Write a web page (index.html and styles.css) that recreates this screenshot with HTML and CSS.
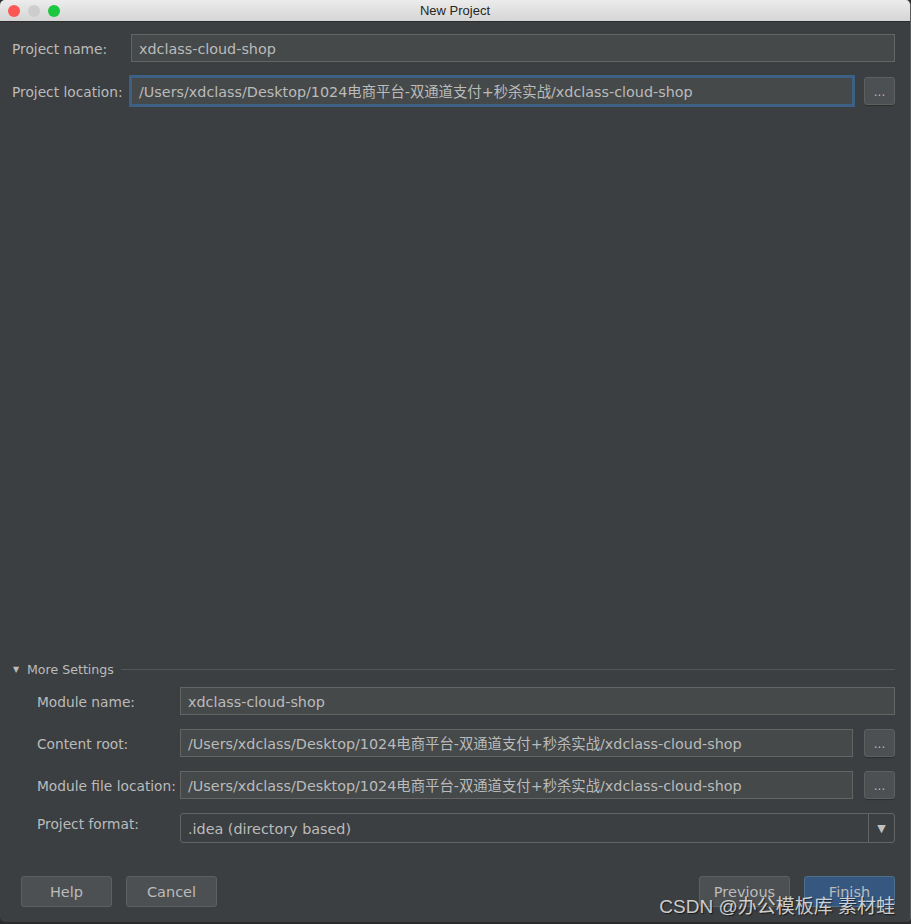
FILE: index.html
```html
<!DOCTYPE html>
<html>
<head>
<meta charset="utf-8">
<link rel="stylesheet" href="styles.css">
</head>
<body>
<div class="window">
  <div class="titlebar">
    <div class="lights">
      <span class="light red"></span>
      <span class="light grey"></span>
      <span class="light green"></span>
    </div>
    <div class="title">New Project</div>
  </div>
  <div class="content">
    <div class="form top">
      <label class="label">Project name:</label>
      <div class="field"><div class="input">xdclass-cloud-shop</div></div>
      <label class="label">Project location:</label>
      <div class="field">
        <div class="input focused">/Users/xdclass/Desktop/1024电商平台-双通道支付+秒杀实战/xdclass-cloud-shop</div>
        <div class="browse">...</div>
      </div>
    </div>
    <div class="spacer"></div>
    <div class="section-head">
      <span class="tri">&#9660;</span>
      <span class="section-title">More Settings</span>
      <span class="rule"></span>
    </div>
    <div class="form sub">
      <label class="label">Module name:</label>
      <div class="field"><div class="input">xdclass-cloud-shop</div></div>
      <label class="label">Content root:</label>
      <div class="field">
        <div class="input">/Users/xdclass/Desktop/1024电商平台-双通道支付+秒杀实战/xdclass-cloud-shop</div>
        <div class="browse">...</div>
      </div>
      <label class="label">Module file location:</label>
      <div class="field">
        <div class="input">/Users/xdclass/Desktop/1024电商平台-双通道支付+秒杀实战/xdclass-cloud-shop</div>
        <div class="browse">...</div>
      </div>
      <label class="label fmt">Project format:</label>
      <div class="field">
        <div class="combo">
          <span class="combo-text">.idea (directory based)</span>
          <span class="combo-arrow">&#9660;</span>
        </div>
      </div>
    </div>
    <div class="footer">
      <div class="btns">
        <div class="btn">Help</div>
        <div class="btn">Cancel</div>
      </div>
      <div class="btns">
        <div class="btn">Previous</div>
        <div class="btn primary">Finish</div>
      </div>
    </div>
    <div class="watermark">CSDN @办公模板库 素材蛙</div>
  </div>
</div>
</body>
</html>
```

FILE: styles.css
```css
html, body {
  margin: 0;
  padding: 0;
  background: #2a2b2c;
}
body {
  width: 911px;
  height: 924px;
  overflow: hidden;
  font-family: "DejaVu Sans", "Noto Sans CJK SC", sans-serif;
}
.window {
  width: 910px;
  height: 922px;
  display: flex;
  flex-direction: column;
  background: #3c3f41;
  border-right: 1px solid #5a5d5f;
  border-radius: 5px;
  overflow: hidden;
}
.titlebar {
  height: 22px;
  flex: none;
  background: linear-gradient(#ececec, #d5d5d5);
  border-bottom: 1px solid #2b2b2b;
  position: relative;
  display: flex;
  align-items: center;
  justify-content: center;
  box-sizing: border-box;
}
.lights {
  position: absolute;
  left: 8px;
  top: 5px;
  display: flex;
  gap: 8px;
}
.light {
  width: 12px;
  height: 12px;
  border-radius: 50%;
  display: block;
}
.red { background: #fc5753; }
.grey { background: #cdcdcd; }
.green { background: #1cc73f; }
.title {
  font-family: "Liberation Sans", "DejaVu Sans", sans-serif;
  font-size: 13px;
  color: #262626;
}
.content {
  flex: 1;
  display: flex;
  flex-direction: column;
  padding: 12px 15px 15px 12px;
  position: relative;
}
.form {
  display: grid;
  row-gap: 14px;
  align-items: center;
  color: #bbbbbb;
}
.form.top {
  grid-template-columns: 119px 1fr;
  row-gap: 15px;
}
.form.sub {
  grid-template-columns: 143px 1fr;
  padding-left: 25px;
}
.label {
  color: #bbbbbb;
  font-size: 13.75px;
  white-space: nowrap;
  padding-top: 1px;
}
.label.fmt {
  align-self: start;
  padding-top: 3px;
}
.field {
  display: flex;
  gap: 11px;
  align-items: center;
}
.input {
  flex: 1;
  height: 28px;
  box-sizing: border-box;
  background: #45494a;
  border: 1px solid #646464;
  color: #bbbbbb;
  font-size: 14.35px;
  line-height: 28px;
  padding: 0 7px;
  white-space: nowrap;
  overflow: hidden;
}
.input.focused {
  border-color: #3d6185;
  box-shadow: 0 0 0 2px #3d6185;
}
.browse {
  width: 31px;
  height: 28px;
  box-sizing: border-box;
  flex: none;
  background: #4c5052;
  border: 1px solid #5e6060;
  border-radius: 3px;
  box-shadow: 0 2px 1px -1px #2b2d2e;
  color: #bbbbbb;
  font-size: 12px;
  text-align: center;
  line-height: 28px;
}
.spacer {
  flex: 1;
}
.section-head {
  display: flex;
  align-items: center;
  height: 16px;
  color: #bbbbbb;
  margin-bottom: 10px;
  padding-top: 1px;
}
.tri {
  font-size: 8px;
  width: 14px;
  padding-left: 1px;
}
.section-title {
  font-size: 12.6px;
}
.rule {
  flex: 1;
  height: 1px;
  background: #535657;
  margin-left: 7px;
}
.combo {
  flex: 1;
  height: 30px;
  box-sizing: border-box;
  background: #3c3f41;
  border: 1px solid #646464;
  border-radius: 3px;
  display: flex;
  align-items: stretch;
  color: #bbbbbb;
}
.combo-text {
  flex: 1;
  padding-left: 7px;
  font-size: 14.35px;
  line-height: 30px;
}
.combo-arrow {
  width: 25px;
  border-left: 1px solid #646464;
  font-size: 11px;
  display: flex;
  align-items: center;
  justify-content: center;
  color: #c2c2c2;
}
.footer {
  display: flex;
  justify-content: space-between;
  margin-top: 33px;
  padding-left: 9px;
}
.btns {
  display: flex;
  gap: 14px;
}
.btn {
  width: 91px;
  height: 31px;
  box-sizing: border-box;
  background: #4c5052;
  border: 1px solid #5e6060;
  border-radius: 3px;
  color: #bbbbbb;
  font-size: 14.5px;
  text-align: center;
  line-height: 30px;
}
.btn.primary {
  background: #365880;
  border-color: #4c708c;
}
.watermark {
  position: absolute;
  right: 15px;
  bottom: 4px;
  font-family: "Liberation Sans", "Noto Sans CJK SC", sans-serif;
  font-size: 19px;
  color: rgba(235, 235, 235, 0.85);
  text-shadow: 1px 1px 1px rgba(0,0,0,0.6);
  white-space: nowrap;
}
```
